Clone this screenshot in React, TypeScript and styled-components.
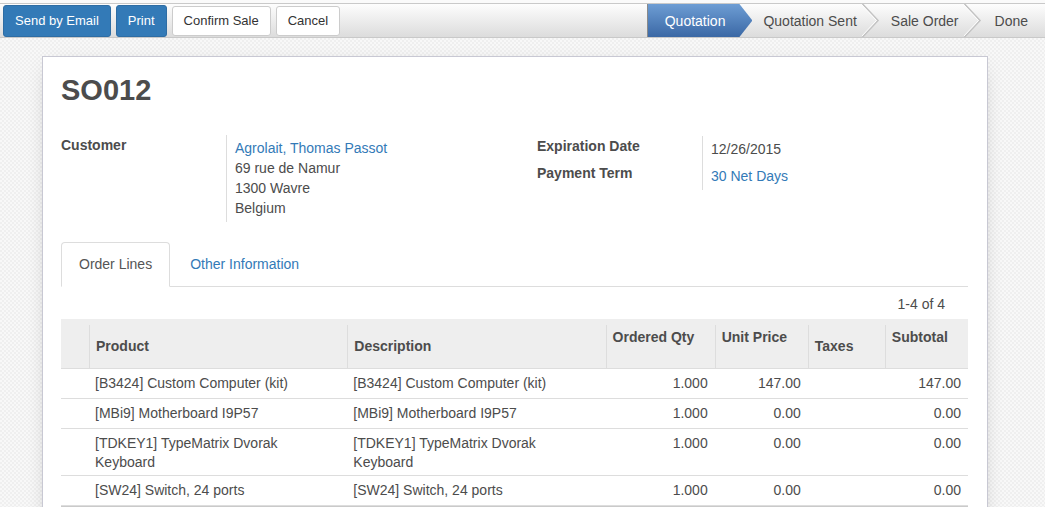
import React from 'react';
import styled, { createGlobalStyle } from 'styled-components';

const GlobalStyle = createGlobalStyle`
  html, body {
    margin: 0;
    padding: 0;
  }
  body {
    font-family: "Liberation Sans", Arial, Helvetica, sans-serif;
    font-size: 14px;
    color: #4c4c4c;
    background: #fff;
  }
`;

const Page = styled.div`
  min-height: 100vh;
  background-color: #f4f4f4;
  background-image: repeating-conic-gradient(#efefef 0 25%, #f8f8f8 0 50%);
  background-size: 4px 4px;
  overflow: hidden;
`;

const TopStrip = styled.div`
  background: #fafafa;
  padding-top: 3px;
`;

const Bar = styled.div`
  display: flex;
  justify-content: space-between;
  align-items: stretch;
  height: 33px;
  border-top: 1px solid #c9c9c9;
  border-bottom: 1px solid #c9c9c9;
  background: linear-gradient(#fdfdfd, #dcdcdc);
`;

const Buttons = styled.div`
  display: flex;
  align-items: center;
  gap: 5px;
  padding-left: 3px;
`;

interface ButtonProps {
  primary?: boolean;
}

const Button = styled.button<ButtonProps>`
  padding: 0 11px;
  font-family: inherit;
  font-size: 13px;
  border-radius: 3px;
  cursor: pointer;
  color: ${props => (props.primary ? '#fff' : '#333')};
  background: ${props => (props.primary ? '#337ab7' : '#fff')};
  border: 1px solid ${props => (props.primary ? '#2e6da4' : '#ccc')};
  height: ${props => (props.primary ? '32px' : '30px')};
`;

const Statusbar = styled.div`
  display: flex;
  align-items: stretch;
`;

const ActiveStep = styled.div`
  display: flex;
  align-items: center;
  padding: 0 27px 0 17px;
  color: #fff;
  background: linear-gradient(#6d9dd4, #3b68a5);
  border-left: 1px solid #8a8a8a;
  clip-path: polygon(0 0, calc(100% - 13px) 0, 100% 50%, calc(100% - 13px) 100%, 0 100%);
`;

interface StepProps {
  last?: boolean;
}

const Step = styled.div<StepProps>`
  display: flex;
  align-items: center;
  padding: ${props => (props.last ? '0 17px 0 13px' : '0 5px 0 11px')};
  color: #4c4c4c;
`;

const Chevron = () => (
  <svg width="18" height="33" viewBox="0 0 18 33" style={{ display: 'block' }}>
    <polyline points="0.5,0 16,16.5 0.5,33" fill="none" stroke="#c3c3c3" strokeWidth="1.6" />
    <polyline points="-1,0 14.5,16.5 -1,33" fill="none" stroke="#ffffff" strokeWidth="1" />
  </svg>
);

const Sheet = styled.div`
  margin: 18px 57px 0 42px;
  background: #fff;
  border: 1px solid #c8c8d3;
  box-shadow: 0 5px 20px -10px rgba(0, 0, 0, 0.35);
  padding: 16px 19px 40px 18px;
`;

const Title = styled.h1`
  margin: 0 0 27px;
  font-size: 29px;
  line-height: 35px;
  font-weight: bold;
  color: #4c4c4c;
`;

const Groups = styled.div`
  display: grid;
  grid-template-columns: 476px 1fr;
`;

interface FieldGridProps {
  offset?: number;
}

const FieldGrid = styled.div<FieldGridProps>`
  display: grid;
  grid-template-columns: 165px 1fr;
  align-content: start;
  padding-top: ${props => props.offset ?? 0}px;
`;

const Label = styled.div`
  font-weight: bold;
  line-height: 20px;
`;

const Value = styled.div`
  border-left: 1px solid #ddd;
  padding: 3px 0 4px 8px;
  line-height: 20px;
`;

const Link = styled.a`
  color: #337ab7;
  text-decoration: none;
  cursor: pointer;
`;

const Tabs = styled.ul`
  display: flex;
  list-style: none;
  margin: 20px 0 0;
  padding: 0;
  border-bottom: 1px solid #ddd;
`;

interface TabProps {
  active?: boolean;
}

const Tab = styled.li<TabProps>`
  margin: 0 2px ${props => (props.active ? '-1px' : '0')} 0;
  padding: 11px 17px ${props => (props.active ? '12px' : '11px')};
  line-height: 20px;
  border: 1px solid ${props => (props.active ? '#ddd' : 'transparent')};
  border-bottom-color: ${props => (props.active ? '#fff' : 'transparent')};
  border-radius: 4px 4px 0 0;
  background: ${props => (props.active ? '#fff' : 'transparent')};
  color: ${props => (props.active ? '#555' : '#337ab7')};
  cursor: pointer;
`;

const Pager = styled.div`
  text-align: right;
  line-height: 20px;
  padding: 7px 23px 5px 0;
`;

const Table = styled.table`
  width: 100%;
  table-layout: fixed;
  border-collapse: separate;
  border-spacing: 0;
`;

interface CellProps {
  numeric?: boolean;
  top?: boolean;
  first?: boolean;
}

const Th = styled.th<CellProps>`
  position: relative;
  background: #eee;
  text-align: left;
  font-weight: bold;
  line-height: 20px;
  vertical-align: ${props => (props.top ? 'top' : 'middle')};
  padding: ${props => (props.top ? '8px 7px 21px' : '12px 7px 8px')};
  border-bottom: 1px solid #ddd;

  &::before {
    content: '';
    display: ${props => (props.first ? 'none' : 'block')};
    position: absolute;
    left: 0;
    top: 6px;
    bottom: 0;
    width: 1px;
    background: #ddd;
  }
`;

const Tr = styled.tr`
  height: 30px;
`;

const Td = styled.td<CellProps>`
  padding: 5px 7px 3px 6px;
  line-height: 19px;
  vertical-align: top;
  text-align: ${props => (props.numeric ? 'right' : 'left')};
  border-bottom: 1px solid #ddd;
`;

const Foot = styled.td`
  border-top: 2px solid #cacaca;
  height: 20px;
`;

interface Line {
  product: string;
  qty: string;
  price: string;
  subtotal: string;
}

const lines: Line[] = [
  { product: '[B3424] Custom Computer (kit)', qty: '1.000', price: '147.00', subtotal: '147.00' },
  { product: '[MBi9] Motherboard I9P57', qty: '1.000', price: '0.00', subtotal: '0.00' },
  { product: '[TDKEY1] TypeMatrix Dvorak Keyboard', qty: '1.000', price: '0.00', subtotal: '0.00' },
  { product: '[SW24] Switch, 24 ports', qty: '1.000', price: '0.00', subtotal: '0.00' },
];

const App: React.FC = () => {
  return (
    <Page>
      <GlobalStyle />
      <TopStrip>
        <Bar>
          <Buttons>
            <Button primary>Send by Email</Button>
            <Button primary>Print</Button>
            <Button>Confirm Sale</Button>
            <Button>Cancel</Button>
          </Buttons>
          <Statusbar>
            <ActiveStep>Quotation</ActiveStep>
            <Step>Quotation Sent</Step>
            <Chevron />
            <Step>Sale Order</Step>
            <Chevron />
            <Step last>Done</Step>
          </Statusbar>
        </Bar>
      </TopStrip>

      <Sheet>
        <Title>SO012</Title>
        <Groups>
          <FieldGrid>
            <Label>Customer</Label>
            <Value>
              <Link>Agrolait, Thomas Passot</Link>
              <div>69 rue de Namur</div>
              <div>1300 Wavre</div>
              <div>Belgium</div>
            </Value>
          </FieldGrid>
          <FieldGrid offset={1}>
            <Label>Expiration Date</Label>
            <Value>12/26/2015</Value>
            <Label>Payment Term</Label>
            <Value>
              <Link>30 Net Days</Link>
            </Value>
          </FieldGrid>
        </Groups>

        <Tabs>
          <Tab active>Order Lines</Tab>
          <Tab>Other Information</Tab>
        </Tabs>

        <Pager>1-4 of 4</Pager>

        <Table>
          <colgroup>
            <col style={{ width: 28 }} />
            <col style={{ width: 258 }} />
            <col style={{ width: 258 }} />
            <col style={{ width: 109 }} />
            <col style={{ width: 93 }} />
            <col style={{ width: 77 }} />
            <col style={{ width: 83 }} />
          </colgroup>
          <thead>
            <tr>
              <Th first />
              <Th>Product</Th>
              <Th>Description</Th>
              <Th top>Ordered Qty</Th>
              <Th top>Unit Price</Th>
              <Th>Taxes</Th>
              <Th top>Subtotal</Th>
            </tr>
          </thead>
          <tbody>
            {lines.map(line => (
              <Tr key={line.product}>
                <Td />
                <Td>{line.product}</Td>
                <Td>{line.product}</Td>
                <Td numeric>{line.qty}</Td>
                <Td numeric>{line.price}</Td>
                <Td />
                <Td numeric>{line.subtotal}</Td>
              </Tr>
            ))}
          </tbody>
          <tfoot>
            <tr>
              <Foot colSpan={7} />
            </tr>
          </tfoot>
        </Table>
      </Sheet>
    </Page>
  );
};

export default App;
